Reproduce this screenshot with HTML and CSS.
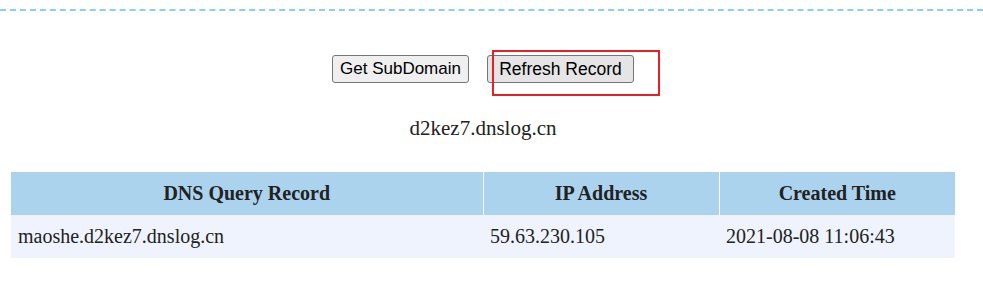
FILE: index.html
```html
<!DOCTYPE html>
<html lang="en">
<head>
    <meta charset="UTF-8">
    <title>DNSLog</title>
    <link rel="stylesheet" href="styles.css">
</head>
<body>
    <div class="divider"></div>

    <div class="container">
        <div class="actions">
            <button class="btn btn-get">Get SubDomain</button>
            <span class="highlight-wrap">
                <button class="btn btn-refresh">Refresh Record</button>
                <span class="highlight"></span>
            </span>
        </div>

        <div class="domain">d2kez7.dnslog.cn</div>

        <table class="records">
            <tr>
                <th class="col-query">DNS Query Record</th>
                <th>IP Address</th>
                <th>Created Time</th>
            </tr>
            <tr>
                <td>maoshe.d2kez7.dnslog.cn</td>
                <td>59.63.230.105</td>
                <td>2021-08-08 11:06:43</td>
            </tr>
        </table>
    </div>
</body>
</html>
```

FILE: styles.css
```css
* {
    margin: 0;
    padding: 0;
    box-sizing: border-box;
}

body {
    background: white;
    color: #222;
    font-family: 'Liberation Serif', serif;
}

.divider {
    margin-top: 9px;
    border-top: 2px dashed #87cefa;
}

.container {
    width: 944px;
    margin-left: 11px;
}

.actions {
    display: flex;
    justify-content: center;
    gap: 18px;
    margin-top: 44px;
}

.btn {
    display: block;
    height: 28px;
    padding: 0;
    font-family: 'Liberation Sans', Arial, sans-serif;
    font-size: 17px;
    color: #000;
    background: #efefef;
    border: 1px solid #767676;
    border-radius: 3px;
}

.btn-get {
    width: 137px;
}

.btn-refresh {
    width: 147px;
    font-size: 17.5px;
    background: #e5e5e5;
}

.highlight-wrap {
    position: relative;
}

.highlight {
    position: absolute;
    left: 5px;
    top: -5px;
    width: 168px;
    height: 46px;
    border: 2px solid #e8202a;
}

.domain {
    text-align: center;
    font-size: 21px;
    margin-top: 33px;
    line-height: 24px;
}

.records {
    width: 100%;
    margin-top: 32px;
    border-collapse: collapse;
}

.records th {
    height: 43px;
    background: #acd3ee;
    font-size: 20px;
    font-weight: bold;
    border-left: 1px solid white;
    width: 25%;
}

.records th:first-child {
    border-left: none;
}

.records th.col-query {
    width: 50%;
}

.records td {
    height: 43px;
    background: #eef3fd;
    font-size: 20px;
    padding: 0 7px;
    text-align: left;
}
```
